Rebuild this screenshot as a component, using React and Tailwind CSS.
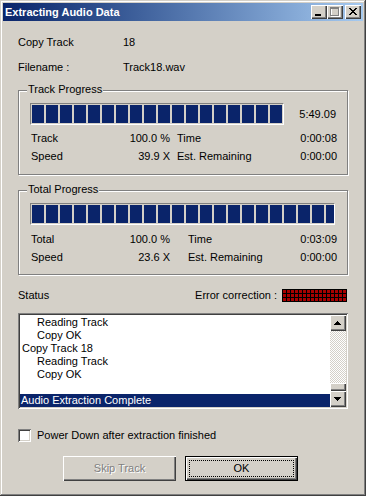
import React from "react";

const raised = "shadow-[inset_1px_1px_#ffffff,inset_-1px_-1px_#404040,inset_-2px_-2px_#808080]";
const sunken = "shadow-[inset_1px_1px_#808080,inset_-1px_-1px_#ffffff,inset_2px_2px_#404040,inset_-2px_-2px_#d4d0c8]";

const xPixels = ["11000011", "01100110", "00111100", "00011000", "00111100", "01100110", "11000011"];

function CloseGlyph() {
	return (
		<svg width="16" height="14" shapeRendering="crispEdges">
			{xPixels.map((row, y) =>
				row.split("").map((c, x) =>
					c === "1" ? <rect key={`${x}-${y}`} x={4 + x} y={3 + y} width="1" height="1" fill="#000" /> : null
				)
			)}
		</svg>
	);
}

function TitleButton({ children, className = "" }) {
	return <div className={`w-[16px] h-[14px] bg-[#d4d0c8] ${raised} ${className}`}>{children}</div>;
}

function Arrow({ up }) {
	const rows = up ? [1, 3, 5, 7] : [7, 5, 3, 1];
	return (
		<svg width="16" height="16" shapeRendering="crispEdges">
			{rows.map((w, i) => (
				<rect key={i} x={8 - (w + 1) / 2} y={6 + i} width={w} height="1" fill="#000" />
			))}
		</svg>
	);
}

function Bar({ className, blocks }) {
	return (
		<div className={`h-[22px] p-px border border-t-[#808080] border-l-[#808080] border-r-white border-b-white overflow-hidden ${className}`}>
			<div className="flex gap-[2px] h-full">
				{Array.from({ length: blocks }, (_, i) => (
					<div key={i} className="w-[12px] h-full shrink-0 bg-[#0a246a]" />
				))}
			</div>
		</div>
	);
}

function StatRow({ a, av, b, bv, gap }) {
	return (
		<div className="h-[18px] flex items-center pl-[12px] pr-[10px]">
			<div className="w-[139px] flex justify-between">
				<span>{a}</span>
				<span>{av}</span>
			</div>
			<div className={`flex-1 flex justify-between ${gap}`}>
				<span>{b}</span>
				<span>{bv}</span>
			</div>
		</div>
	);
}

function Group({ title, className = "", children }) {
	return (
		<div className={`relative h-[85px] border border-[#808080] shadow-[inset_1px_1px_#ffffff,1px_1px_#ffffff] ${className}`}>
			<span className="absolute left-[8px] top-[-8px] px-px leading-[13px] bg-[#d4d0c8]">{title}</span>
			{children}
		</div>
	);
}

const logLines = [
	{ t: "Reading Track", indent: true },
	{ t: "Copy OK", indent: true },
	{ t: "Copy Track 18" },
	{ t: "Reading Track", indent: true },
	{ t: "Copy OK", indent: true },
	{ t: "" },
];

export default function App() {
	return (
		<div className="w-[366px] h-[496px] bg-[#d4d0c8] p-[3px] flex flex-col text-[11px] text-black font-['Liberation_Sans',Arial,sans-serif] shadow-[inset_-1px_-1px_#404040,inset_1px_1px_#d4d0c8,inset_-2px_-2px_#808080,inset_2px_2px_#ffffff]">
			{/* Title bar */}
			<div className="h-[18px] shrink-0 flex items-center justify-between pl-[2px] pr-[2px] bg-linear-to-r from-[#0a246a] to-[#a6caf0]">
				<span className="font-bold text-white leading-[13px]">Extracting Audio Data</span>
				<div className="flex items-center">
					<TitleButton>
						<svg width="16" height="14" shapeRendering="crispEdges">
							<rect x="4" y="9" width="6" height="2" fill="#000" />
						</svg>
					</TitleButton>
					<TitleButton>
						<svg width="16" height="14" shapeRendering="crispEdges">
							<rect x="4.5" y="3.5" width="8" height="8" fill="none" stroke="#ffffff" />
							<rect x="3" y="2" width="9" height="2" fill="#808080" />
							<rect x="3.5" y="2.5" width="8" height="8" fill="none" stroke="#808080" />
						</svg>
					</TitleButton>
					<TitleButton className="ml-[2px]">
						<CloseGlyph />
					</TitleButton>
				</div>
			</div>

			<div className="px-[15px] flex flex-col">
				<div className="mt-[15px] h-[13px] leading-[13px] flex">
					<span className="w-[105px]">Copy Track</span>
					<span>18</span>
				</div>
				<div className="mt-[12px] h-[13px] leading-[13px] flex">
					<span className="w-[105px]">Filename :</span>
					<span>Track18.wav</span>
				</div>

				<Group title="Track Progress" className="mt-[16px]">
					<div className="pt-[12px] pl-[11px] pr-[11px] flex items-center justify-between">
						<Bar className="w-[254px]" blocks={18} />
						<span>5:49.09</span>
					</div>
					<div className="mt-[4px]">
						<StatRow a="Track" av="100.0 %" b="Time" bv="0:00:08" gap="ml-[7px]" />
						<StatRow a="Speed" av="39.9 X" b="Est. Remaining" bv="0:00:00" gap="ml-[7px]" />
					</div>
				</Group>

				<Group title="Total Progress" className="mt-[15px]">
					<div className="pt-[12px] pl-[11px]">
						<Bar className="w-[305px]" blocks={22} />
					</div>
					<div className="mt-[5px]">
						<StatRow a="Total" av="100.0 %" b="Time" bv="0:03:09" gap="ml-[18px]" />
						<StatRow a="Speed" av="23.6 X" b="Est. Remaining" bv="0:00:00" gap="ml-[18px]" />
					</div>
				</Group>

				{/* Status */}
				<div className="mt-[14px] h-[13px] flex items-center justify-between">
					<span>Status</span>
					<div className="flex items-center mr-px">
						<span>Error correction :</span>
						<div className="ml-[5px] bg-black p-px grid grid-cols-[repeat(16,3px)] grid-rows-[repeat(3,3px)] gap-px">
							{Array.from({ length: 48 }, (_, i) => (
								<div key={i} className="bg-[#a80000]" />
							))}
						</div>
					</div>
				</div>

				{/* Log listbox */}
				<div className={`mt-[11px] h-[96px] bg-white p-[2px] flex ${sunken}`}>
					<div className="flex-1 flex flex-col justify-end overflow-hidden leading-[13px]">
						{logLines.map((l, i) => (
							<div key={i} className={`h-[13px] shrink-0 whitespace-nowrap ${l.indent ? "pl-[17px]" : "pl-[2px]"}`}>
								{l.t}
							</div>
						))}
						<div className="h-[13px] shrink-0 pl-[1px] bg-[#0a246a] text-white whitespace-nowrap">Audio Extraction Complete</div>
					</div>
					<div className="w-[16px] flex flex-col">
						<div className={`h-[16px] bg-[#d4d0c8] ${raised}`}>
							<Arrow up />
						</div>
						<div className="flex-1 bg-[repeating-conic-gradient(#d4d0c8_0%_25%,#ffffff_0%_50%)] bg-[length:2px_2px]" />
						<div className={`h-[8px] bg-[#d4d0c8] ${raised}`} />
						<div className={`h-[16px] bg-[#d4d0c8] ${raised}`}>
							<Arrow />
						</div>
					</div>
				</div>

				{/* Checkbox */}
				<div className="mt-[20px] h-[13px] flex items-center">
					<div className={`w-[13px] h-[13px] bg-white ${sunken}`} />
					<span className="ml-[6px]">Power Down after extraction finished</span>
				</div>

				{/* Buttons */}
				<div className="mt-[14px] flex ml-[45px] gap-[9px]">
					<div className={`w-[113px] h-[25px] flex items-center justify-center text-[#808080] [text-shadow:1px_1px_#ffffff] ${raised}`}>
						Skip Track
					</div>
					<div className="w-[113px] h-[25px] border border-black">
						<div className={`w-full h-full p-[3px] ${raised}`}>
							<div className="w-full h-full border border-dotted border-black flex items-center justify-center">OK</div>
						</div>
					</div>
				</div>
			</div>
		</div>
	);
}
